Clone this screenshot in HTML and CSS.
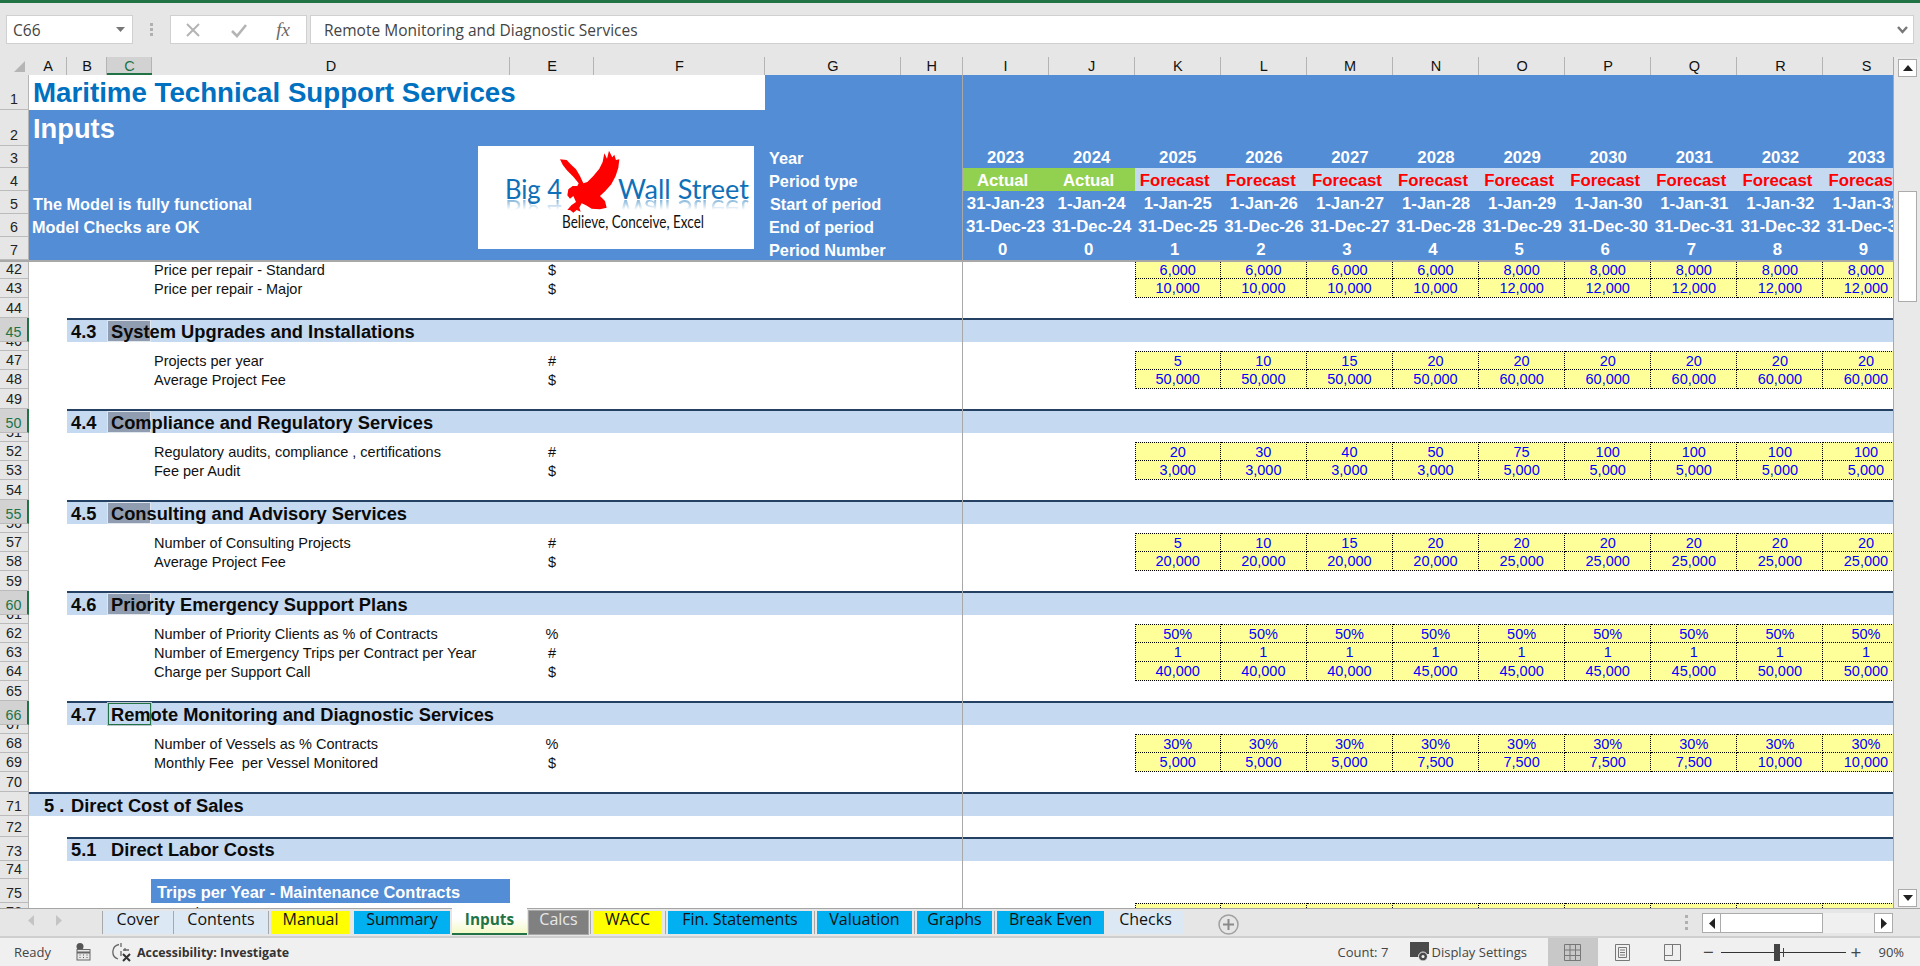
FILE: index.html
```html
<!DOCTYPE html>
<html lang="en">
<head>
<meta charset="utf-8">
<title>Maritime Technical Support Services - Inputs</title>
<link rel="stylesheet" href="styles.css">
</head>
<body>
<div class="app">
  <div class="ribbon-edge"></div>

  <div class="formula-bar">
    <div class="name-box"><span>C66</span><svg class="tri" width="9" height="5" viewBox="0 0 9 5"><path d="M0 0h9L4.5 5z"/></svg></div>
    <div class="grip"><i></i><i></i><i></i></div>
    <div class="fn-box">
      <svg width="16" height="16" viewBox="0 0 16 16"><path d="M2 2l12 12M14 2L2 14" stroke="#b4b4b4" stroke-width="2" fill="none"/></svg>
      <svg width="18" height="16" viewBox="0 0 18 16"><path d="M2 9l5 5L16 3" stroke="#b4b4b4" stroke-width="2.6" fill="none"/></svg>
      <span class="fx">fx</span>
    </div>
    <div class="formula-input"><span>Remote Monitoring and Diagnostic Services</span>
      <svg width="11" height="8" viewBox="0 0 11 8"><path d="M1 1l4.500 5L10 1" stroke="#777" stroke-width="2.400" fill="none"/></svg>
    </div>
  </div>

  <div class="workspace">
    <div class="sheet">
      <div class="col-heads">
        <div class="corner"><svg width="11" height="11" viewBox="0 0 11 11"><path d="M11 0v11H0z" fill="#b5b5b5"/></svg></div>
        <div class="ch">A</div><div class="ch">B</div><div class="ch on">C</div><div class="ch">D</div><div class="ch">E</div><div class="ch">F</div><div class="ch">G</div><div class="ch">H</div>
        <div class="ch">I</div><div class="ch">J</div><div class="ch">K</div><div class="ch">L</div><div class="ch">M</div><div class="ch">N</div><div class="ch">O</div><div class="ch">P</div><div class="ch">Q</div><div class="ch">R</div><div class="ch">S</div>
      </div>

      <div class="banner">
        <div class="b b1"><div class="rh">1</div><div class="title-cell">Maritime Technical Support Services</div></div>
        <div class="b b2"><div class="rh">2</div><div class="inputs-cell">Inputs</div></div>
        <div class="b b3"><div class="rh">3</div><div class="note"></div><div class="tl-label">Year</div><div></div>
          <div class="tl">2023</div><div class="tl">2024</div><div class="tl">2025</div><div class="tl">2026</div><div class="tl">2027</div><div class="tl">2028</div><div class="tl">2029</div><div class="tl">2030</div><div class="tl">2031</div><div class="tl">2032</div><div class="tl">2033</div></div>
        <div class="b b4"><div class="rh">4</div><div class="note"></div><div class="tl-label">Period type</div><div></div>
          <div class="tl act">Actual</div><div class="tl act">Actual</div><div class="tl fc">Forecast</div><div class="tl fc">Forecast</div><div class="tl fc">Forecast</div><div class="tl fc">Forecast</div><div class="tl fc">Forecast</div><div class="tl fc">Forecast</div><div class="tl fc">Forecast</div><div class="tl fc">Forecast</div><div class="tl fc">Forecast</div></div>
        <div class="b b4"><div class="rh">5</div><div class="note">The Model is fully functional</div><div class="tl-label start">Start of period</div><div></div>
          <div class="tl">31-Jan-23</div><div class="tl">1-Jan-24</div><div class="tl">1-Jan-25</div><div class="tl">1-Jan-26</div><div class="tl">1-Jan-27</div><div class="tl">1-Jan-28</div><div class="tl">1-Jan-29</div><div class="tl">1-Jan-30</div><div class="tl">1-Jan-31</div><div class="tl">1-Jan-32</div><div class="tl">1-Jan-33</div></div>
        <div class="b b4"><div class="rh">6</div><div class="note check">Model Checks are OK</div><div class="tl-label">End of period</div><div></div>
          <div class="tl">31-Dec-23</div><div class="tl">31-Dec-24</div><div class="tl">31-Dec-25</div><div class="tl">31-Dec-26</div><div class="tl">31-Dec-27</div><div class="tl">31-Dec-28</div><div class="tl">31-Dec-29</div><div class="tl">31-Dec-30</div><div class="tl">31-Dec-31</div><div class="tl">31-Dec-32</div><div class="tl">31-Dec-33</div></div>
        <div class="b b4"><div class="rh">7</div><div class="note"></div><div class="tl-label">Period Number</div><div></div>
          <div class="tl num">0</div><div class="tl num">0</div><div class="tl num">1</div><div class="tl num">2</div><div class="tl num">3</div><div class="tl num">4</div><div class="tl num">5</div><div class="tl num">6</div><div class="tl num">7</div><div class="tl num">8</div><div class="tl num">9</div></div>

        <svg class="logo" width="276" height="103" viewBox="0 0 276 103">
          <defs>
            <linearGradient id="fade" x1="0" y1="0" x2="0" y2="1"><stop offset="0" stop-color="#fff" stop-opacity=".55"/><stop offset="1" stop-color="#fff" stop-opacity="0"/></linearGradient>
            <mask id="rm"><rect x="0" y="53" width="276" height="11" fill="url(#fade)"/></mask>
            <text id="big" x="27" y="53" class="lg" textLength="57" lengthAdjust="spacingAndGlyphs">Big 4</text>
            <text id="wall" x="140" y="53" class="lg" textLength="131" lengthAdjust="spacingAndGlyphs">Wall Street</text>
          </defs>
          <use href="#big"/>
          <use href="#wall"/>
          <g mask="url(#rm)"><use href="#big" transform="matrix(1 0 0 -1 0 107)"/><use href="#wall" transform="matrix(1 0 0 -1 0 107)"/></g>
          <text x="84" y="82" class="tag" textLength="142" lengthAdjust="spacingAndGlyphs">Believe, Conceive, Excel</text>
          <polygon transform="translate(72 0) scale(.3333)" fill="#f00" points="30,40 50,42 62,55 78,70 90,90 100,112 112,108 130,90 148,68 158,48 163,22 171,38 177,14 187,34 193,26 198,42 208,40 205,65 197,90 184,115 166,135 150,150 165,165 170,185 150,190 125,188 108,178 95,172 88,185 92,197 80,192 70,200 60,192 52,192 64,178 78,168 70,150 60,158 52,148 55,130 68,120 82,120 86,112 70,92 50,72 38,56"/>
        </svg>
      </div>

      <div class="rows">
        <div class="r first"><div class="rh">42</div><div class="lbl">Price per repair - Standard</div><div class="unit">$</div><div class="cell k">6,000</div><div class="cell">6,000</div><div class="cell">6,000</div><div class="cell">6,000</div><div class="cell">8,000</div><div class="cell">8,000</div><div class="cell">8,000</div><div class="cell">8,000</div><div class="cell">8,000</div></div>
        <div class="r"><div class="rh">43</div><div class="lbl">Price per repair - Major</div><div class="unit">$</div><div class="cell k">10,000</div><div class="cell">10,000</div><div class="cell">10,000</div><div class="cell">10,000</div><div class="cell">12,000</div><div class="cell">12,000</div><div class="cell">12,000</div><div class="cell">12,000</div><div class="cell">12,000</div></div>
        <div class="r blank"><div class="rh">44</div></div>

        <div class="r sec"><div class="rh on">45</div><div class="bar"><div class="no">4.3</div><div class="ti"><i class="sel"></i><span>System Upgrades and Installations</span></div></div></div>
        <div class="r gap"><div class="rh">46</div></div>
        <div class="r first"><div class="rh">47</div><div class="lbl">Projects per year</div><div class="unit">#</div><div class="cell k">5</div><div class="cell">10</div><div class="cell">15</div><div class="cell">20</div><div class="cell">20</div><div class="cell">20</div><div class="cell">20</div><div class="cell">20</div><div class="cell">20</div></div>
        <div class="r"><div class="rh">48</div><div class="lbl">Average Project Fee</div><div class="unit">$</div><div class="cell k">50,000</div><div class="cell">50,000</div><div class="cell">50,000</div><div class="cell">50,000</div><div class="cell">60,000</div><div class="cell">60,000</div><div class="cell">60,000</div><div class="cell">60,000</div><div class="cell">60,000</div></div>
        <div class="r blank"><div class="rh">49</div></div>

        <div class="r sec"><div class="rh on">50</div><div class="bar"><div class="no">4.4</div><div class="ti"><i class="sel"></i><span>Compliance and Regulatory Services</span></div></div></div>
        <div class="r gap"><div class="rh">51</div></div>
        <div class="r first"><div class="rh">52</div><div class="lbl">Regulatory audits, compliance , certifications</div><div class="unit">#</div><div class="cell k">20</div><div class="cell">30</div><div class="cell">40</div><div class="cell">50</div><div class="cell">75</div><div class="cell">100</div><div class="cell">100</div><div class="cell">100</div><div class="cell">100</div></div>
        <div class="r"><div class="rh">53</div><div class="lbl">Fee per Audit</div><div class="unit">$</div><div class="cell k">3,000</div><div class="cell">3,000</div><div class="cell">3,000</div><div class="cell">3,000</div><div class="cell">5,000</div><div class="cell">5,000</div><div class="cell">5,000</div><div class="cell">5,000</div><div class="cell">5,000</div></div>
        <div class="r blank"><div class="rh">54</div></div>

        <div class="r sec"><div class="rh on">55</div><div class="bar"><div class="no">4.5</div><div class="ti"><i class="sel"></i><span>Consulting and Advisory Services</span></div></div></div>
        <div class="r gap"><div class="rh">56</div></div>
        <div class="r first"><div class="rh">57</div><div class="lbl">Number of Consulting Projects</div><div class="unit">#</div><div class="cell k">5</div><div class="cell">10</div><div class="cell">15</div><div class="cell">20</div><div class="cell">20</div><div class="cell">20</div><div class="cell">20</div><div class="cell">20</div><div class="cell">20</div></div>
        <div class="r"><div class="rh">58</div><div class="lbl">Average Project Fee</div><div class="unit">$</div><div class="cell k">20,000</div><div class="cell">20,000</div><div class="cell">20,000</div><div class="cell">20,000</div><div class="cell">25,000</div><div class="cell">25,000</div><div class="cell">25,000</div><div class="cell">25,000</div><div class="cell">25,000</div></div>
        <div class="r blank"><div class="rh">59</div></div>

        <div class="r sec"><div class="rh on">60</div><div class="bar"><div class="no">4.6</div><div class="ti"><i class="sel"></i><span>Priority Emergency Support Plans</span></div></div></div>
        <div class="r gap"><div class="rh">61</div></div>
        <div class="r first"><div class="rh">62</div><div class="lbl">Number of Priority Clients as % of Contracts</div><div class="unit">%</div><div class="cell k">50%</div><div class="cell">50%</div><div class="cell">50%</div><div class="cell">50%</div><div class="cell">50%</div><div class="cell">50%</div><div class="cell">50%</div><div class="cell">50%</div><div class="cell">50%</div></div>
        <div class="r"><div class="rh">63</div><div class="lbl">Number of Emergency Trips per Contract per Year</div><div class="unit">#</div><div class="cell k">1</div><div class="cell">1</div><div class="cell">1</div><div class="cell">1</div><div class="cell">1</div><div class="cell">1</div><div class="cell">1</div><div class="cell">1</div><div class="cell">1</div></div>
        <div class="r"><div class="rh">64</div><div class="lbl">Charge per Support Call</div><div class="unit">$</div><div class="cell k">40,000</div><div class="cell">40,000</div><div class="cell">40,000</div><div class="cell">45,000</div><div class="cell">45,000</div><div class="cell">45,000</div><div class="cell">45,000</div><div class="cell">50,000</div><div class="cell">50,000</div></div>
        <div class="r blank"><div class="rh">65</div></div>

        <div class="r sec"><div class="rh on">66</div><div class="bar"><div class="no">4.7</div><div class="ti"><i class="active"></i><span>Remote Monitoring and Diagnostic Services</span></div></div></div>
        <div class="r gap"><div class="rh">67</div></div>
        <div class="r first"><div class="rh">68</div><div class="lbl">Number of Vessels as % Contracts</div><div class="unit">%</div><div class="cell k">30%</div><div class="cell">30%</div><div class="cell">30%</div><div class="cell">30%</div><div class="cell">30%</div><div class="cell">30%</div><div class="cell">30%</div><div class="cell">30%</div><div class="cell">30%</div></div>
        <div class="r"><div class="rh">69</div><div class="lbl">Monthly Fee&nbsp; per Vessel Monitored</div><div class="unit">$</div><div class="cell k">5,000</div><div class="cell">5,000</div><div class="cell">5,000</div><div class="cell">7,500</div><div class="cell">7,500</div><div class="cell">7,500</div><div class="cell">7,500</div><div class="cell">10,000</div><div class="cell">10,000</div></div>
        <div class="r blank"><div class="rh">70</div></div>

        <div class="r sec wide"><div class="rh">71</div><div class="bar"><div class="no">5 .</div><div class="ti"><span>Direct Cost of Sales</span></div></div></div>
        <div class="r r72"><div class="rh">72</div></div>
        <div class="r sec"><div class="rh">73</div><div class="bar"><div class="no">5.1</div><div class="ti"><span>Direct Labor Costs</span></div></div></div>
        <div class="r r74"><div class="rh">74</div></div>
        <div class="r r75"><div class="rh">75</div><div class="box-title">Trips per Year - Maintenance Contracts</div></div>
        <div class="r first"><div class="rh">76</div><div class="lbl">Avg Trips per Contract</div><div class="unit">#</div><div class="cell k">2</div><div class="cell">2</div><div class="cell">2</div><div class="cell">2</div><div class="cell">2</div><div class="cell">2</div><div class="cell">2</div><div class="cell">2</div><div class="cell">2</div></div>
      </div>

      <div class="freeze-v"></div>
      <div class="freeze-h"></div>
    </div>

    <div class="vscroll">
      <div class="vbtn"><svg width="10" height="6" viewBox="0 0 10 6"><path d="M5 0l5 6H0z"/></svg></div>
      <div class="vspace a"></div>
      <div class="vthumb"></div>
      <div class="vspace"></div>
      <div class="vbtn"><svg width="10" height="6" viewBox="0 0 10 6"><path d="M0 0h10L5 6z"/></svg></div>
    </div>
  </div>

  <div class="tabbar">
    <div class="nav">
      <svg width="6" height="11" viewBox="0 0 6 11"><path d="M6 0v11L0 5.500z"/></svg>
      <svg width="6" height="11" viewBox="0 0 6 11"><path d="M0 0v11l6-5.500z"/></svg>
    </div>
    <div class="tab lt cover">Cover</div>
    <div class="tab lt contents">Contents</div>
    <div class="tab yl manual">Manual</div>
    <div class="tab bl summary">Summary</div>
    <div class="tab cur">Inputs</div>
    <div class="tab gy calcs">Calcs</div>
    <div class="tab yl wacc">WACC</div>
    <div class="tab bl fin">Fin. Statements</div>
    <div class="tab bl val">Valuation</div>
    <div class="tab bl gra">Graphs</div>
    <div class="tab bl bre">Break Even</div>
    <div class="tab lt che">Checks</div>
    <svg class="add" width="21" height="21" viewBox="0 0 21 21"><circle cx="10.500" cy="10.500" r="9.500" fill="none" stroke="#a0a0a0" stroke-width="1.500"/><path d="M10.500 5v11M5 10.500h11" stroke="#8a8a8a" stroke-width="2"/></svg>
    <div class="hgrip"><i></i><i></i><i></i></div>
    <div class="hscroll">
      <div class="hbtn"><svg width="6" height="11" viewBox="0 0 6 11"><path d="M6 0v11L0 5.500z"/></svg></div>
      <div class="hthumb"></div>
      <div class="htrack"></div>
      <div class="hbtn"><svg width="6" height="11" viewBox="0 0 6 11"><path d="M0 0v11l6-5.500z"/></svg></div>
    </div>
  </div>

  <div class="statusbar">
    <span class="ready">Ready</span>
    <svg class="macro" width="15" height="18" viewBox="0 0 15 18"><circle cx="4" cy="3.500" r="3.500" fill="#555"/><rect x="1" y="6.500" width="13" height="10.500" fill="#e8e8e8" stroke="#666"/><path d="M1 9.500h13" stroke="#666" stroke-width="2"/><path d="M3.500 12h1M7 12h1M10.500 12h1M3.500 14.500h1M7 14.500h1M10.500 14.500h1" stroke="#555"/></svg>
    <svg class="a11y" width="20" height="20" viewBox="0 0 20 20"><path d="M7 2.500A7.500 7.500 0 0 0 6 17M9 1v4M11 8h6M13 6v3M9 9v5" stroke="#666" stroke-width="1.300" fill="none"/><path d="M11 12l7 7M18 12l-7 7" stroke="#333" stroke-width="2" fill="none"/></svg>
    <b class="a11y-t">Accessibility: Investigate</b>
    <span class="count">Count: 7</span>
    <svg class="disp" width="20" height="20" viewBox="0 0 20 20"><path d="M0 0h19v12H10v3H0z" fill="#4a4a4a"/><circle cx="13" cy="14.500" r="4.500" fill="#4a4a4a" stroke="#f0f0f0"/><circle cx="13" cy="14.500" r="1.500" fill="#f0f0f0"/></svg>
    <span class="dset">Display Settings</span>
    <div class="view sel-view"><svg width="17" height="17" viewBox="0 0 17 17"><path d="M.5.500h16v16H.5zM.5 6h16M.5 11.500h16M6 .500v16M11.500.500v16" fill="none" stroke="#777"/></svg></div>
    <div class="view"><svg width="15" height="17" viewBox="0 0 15 17"><path d="M.5.500h14v16H.5z" fill="none" stroke="#777"/><path d="M3.500 3.500h8v10h-8zM5 6h5M5 8.500h5M5 11h5" fill="none" stroke="#777"/></svg></div>
    <div class="view"><svg width="17" height="17" viewBox="0 0 17 17"><path d="M.5.500h16v16H.5zM.5 11.500h8V.500" fill="none" stroke="#777"/></svg></div>
    <div class="zoom">
      <span class="zs">&minus;</span>
      <div class="slider"><i class="thumb"></i><i class="tick"></i></div>
      <span class="zs plus">+</span>
      <span class="pct">90%</span>
    </div>
  </div>
</div>
</body>
</html>
```

FILE: styles.css
```css
* { box-sizing: border-box; }
html, body { margin: 0; height: 100%; overflow: hidden; }
body { background: #e6e6e6; font-family: "Liberation Sans", Arial, sans-serif; color: #000; }
.app { width: 1920px; height: 966px; display: flex; flex-direction: column; }
.ribbon-edge { height: 3px; background: #217346; flex: none; }

/* formula bar */
.formula-bar { height: 54px; flex: none; display: flex; align-items: flex-start; padding: 12px 6px 0 6px; font-family: "Open Sans", sans-serif; }
.name-box, .fn-box, .formula-input { height: 29px; background: #fff; border: 1px solid #d0d0d0; display: flex; align-items: center; }
.name-box { width: 127px; padding: 0 7px 0 6px; justify-content: space-between; font-size: 15.500px; color: #444; }
.tri { fill: #777; }
.grip { width: 37px; height: 29px; display: flex; flex-direction: column; gap: 2px; align-items: center; justify-content: center; }
.grip i, .hgrip i { display: block; width: 3px; height: 3px; background: #b0b0b0; }
.fn-box { width: 137px; padding: 0 16px 0 14px; justify-content: space-between; }
.fx { font: italic 19px "Liberation Serif", serif; color: #6a6a6a; }
.formula-input { margin-left: 3px; flex: 1; justify-content: space-between; padding: 0 5px 0 13px; font-size: 15.500px; color: #444; }

/* main grid */
.workspace { height: 851px; flex: none; display: flex; }
.sheet { width: 1894px; flex: none; position: relative; overflow: hidden; background: #fff; border-right: 1px solid #a8a8a8; }
.col-heads { height: 18px; background: #e6e6e6; display: grid; grid-template-rows: 100%; grid-template-columns: 29px 38px 40px 45px 358px 84px 171px 136px 61.500px repeat(11, 86.1px); }
.corner { position: relative; display: flex; justify-content: flex-end; align-items: flex-end; padding: 0 4px 3px 0; }
.ch { font-size: 14.500px; line-height: 18px; text-align: center; color: #111; position: relative; }
.ch::after { content: ""; position: absolute; right: 0; top: 0; bottom: 0; width: 1px; background: #b4b4b4; }
.ch.on { background: #d2d2d2; color: #217346; border-bottom: 2px solid #217346; }

.rh { background: #e6e6e6; border-bottom: 1px solid #bbb; border-right: 1px solid #b5b5b5; font-size: 14.300px; font-weight: 400; line-height: 16px; color: #222; display: flex; justify-content: center; align-items: flex-end; padding-bottom: 1px; overflow: hidden; }
.rh.on { background: #d2d2d2; color: #217346; border-right: 2px solid #217346; }

.banner { position: relative; background: #538dd5; color: #fff; font-weight: 700; }
.b { display: grid; height: 23px; grid-template-rows: 100%; grid-template-columns: 29px 736px 136px 61.500px repeat(11, 86.1px); font-size: 16.300px; line-height: 25px; }
.b1 { height: 35px; grid-template-columns: 29px 736px; }
.b2 { height: 36px; grid-template-columns: 29px 736px; }
.b3 { height: 22px; line-height: 24px; }
.b1 .rh, .b2 .rh { padding-bottom: 2px; }
.title-cell { background: #fff; color: #0070c0; font-size: 27.700px; line-height: 36px; padding-left: 4px; white-space: nowrap; }
.inputs-cell { font-size: 27.300px; line-height: 37px; padding-left: 4px; }
.note { padding-left: 4px; line-height: 26px; }
.note.check { padding-left: 3px; }
.tl-label { padding-left: 4px; white-space: nowrap; line-height: 26px; }
.b3 .tl-label { line-height: 25px; }
.tl-label.start { padding-left: 5px; }
.tl { text-align: center; white-space: nowrap; font-size: 16.800px; }
.act, .num, .fc { padding-right: 6px; }
.act { background: #92d050; }
.fc { background: #c5d9f1; color: #f00; }
.logo { position: absolute; left: 478px; top: 71px; background: #fff; }
.lg { font: 400 27px Lato, sans-serif; fill: #0f70b7; }
.tag { font: 400 17px Lato, sans-serif; fill: #111; }

.rows { font-size: 14.500px; }
.r { display: grid; height: 19px; grid-template-rows: 100%; grid-template-columns: 29px 123px 358px 84px 540.700px repeat(9, 86.1px); line-height: 19px; }
.r .rh { grid-column: 1; }
.blank { height: 20px; }
.gap { height: 9px; }
.r72 { height: 20.500px; }
.r74 { height: 18.500px; }
.r75 { height: 24px; }
.lbl { grid-column: 3; padding: 1px 0 0 2px; white-space: nowrap; color: #111; }
.unit { grid-column: 4; text-align: center; padding-top: 1px; color: #111; }
.cell { background: #ffff99; color: #0000ff; text-align: center; border-right: 1px dotted #000; border-bottom: 1px dotted #000; line-height: 19.500px; }
.cell.k { grid-column: 6; border-left: 1px dotted #000; }
.first .cell { border-top: 1px dotted #000; line-height: 18.500px; }

.sec { height: 24px; grid-template-columns: 29px 38px 1fr; }
.sec .bar { grid-column: 3; }
.bar { background: #c5d9f1; border-top: 2px solid #244062; display: flex; font-size: 18.300px; font-weight: 700; line-height: 23px; color: #0a0a0a; white-space: nowrap; }
.no { width: 40px; padding-left: 4px; flex: none; }
.ti { position: relative; flex: 1; padding-left: 4px; }
.ti span { position: relative; }
.sel { position: absolute; left: 0; top: 0; width: 44px; height: 22px; background: rgba(50, 50, 60, .36); border: 1px solid #e0e6ee; }
.active { position: absolute; left: 1px; top: 0; width: 43px; height: 22px; background: none; border: 1px solid #217346; outline: 1px solid #bcc7d0; }
.wide { grid-template-columns: 29px 1fr; }
.wide .bar { grid-column: 2; }
.wide .no { width: 42px; padding-left: 15px; }
.wide .ti { padding-left: 0; }
.r72 + .sec .bar { line-height: 22px; }
.box-title { grid-column: 3; background: #538dd5; color: #fff; font-weight: 700; font-size: 16.400px; line-height: 26px; padding-left: 6px; white-space: nowrap; margin-left: -1px; }

.freeze-v { position: absolute; left: 962px; top: 18px; bottom: 0; width: 1px; background: #a8a8a8; }
.freeze-h { position: absolute; left: 0; right: 0; top: 203px; height: 2px; background: #a8a8a8; }

/* vertical scrollbar */
.vscroll { flex: 1; padding: 2px 3px 1px 4px; display: flex; flex-direction: column; background: #e9e9e9; }
.vbtn { height: 18px; flex: none; background: #fff; border: 1px solid #ababab; display: flex; align-items: center; justify-content: center; fill: #222; }
.vspace { flex: 1; }
.vspace.a { flex: none; height: 114px; }
.vthumb { height: 111px; flex: none; background: #fff; border: 1px solid #ababab; }

/* tabs */
.tabbar { height: 30px; flex: none; background: #e6e6e6; display: flex; border-top: 1px solid #a5a5a5; border-bottom: 2px solid #cfcfcf; font-family: "Open Sans", sans-serif; font-size: 16px; position: relative; padding-top: 2px; }
.nav { width: 103px; padding: 4px 0 0 28px; display: flex; gap: 22px; align-items: flex-start; fill: #c4c4c4; flex: none; }
.tab { height: 23px; line-height: 16px; text-align: center; white-space: nowrap; color: #111; position: relative; flex: none; }
.tab::before { content: ""; position: absolute; left: -3px; top: 0; height: 23px; width: 1px; background: #a8a8a8; }
.lt { background: #dce9f5; }
.yl { background: #ff0; }
.bl { background: #00b0f0; }
.gy { background: #808080; color: #e8e8e8; }
.cover { width: 70px; }
.cover::before { left: -1px; }
.contents { width: 94px; margin-left: 1px; }
.contents::before { left: -1px; }
.manual { width: 79px; margin-left: 3px; }
.summary { width: 96px; margin-left: 4px; }
.summary::before { display: none; }
.cur { width: 75px; margin-left: 2px; height: 27px; margin-top: -3px; padding-top: 3px; background: linear-gradient(#fff 40%, #f4f9c8); border-bottom: 2px solid #217346; color: #217346; font-weight: 700; font-size: 15.400px; line-height: 17px; }
.cur::before { display: none; }
.calcs { width: 59px; margin-left: 2px; outline: 1px solid #a8a8a8; }
.calcs::before { display: none; }
.wacc { width: 69px; margin-left: 5px; }
.fin { width: 144px; margin-left: 6px; }
.val { width: 95px; margin-left: 5px; }
.gra { width: 75px; margin-left: 5px; }
.bre { width: 107px; margin-left: 5px; }
.che { width: 75px; margin-left: 4px; }
.che::before { display: none; }
.add { margin: 3px 0 0 35px; flex: none; }
.hgrip { margin: 4px 0 0 446px; width: 4px; display: flex; flex-direction: column; gap: 3px; height: 16px; }
.hscroll { position: absolute; left: 1702px; top: 4px; width: 191px; height: 20px; display: flex; background: #f0f0f0; }
.hbtn { width: 19px; flex: none; background: #fff; border: 1px solid #ababab; display: flex; align-items: center; justify-content: center; fill: #222; }
.hthumb { width: 102px; flex: none; background: #fff; border: 1px solid #ababab; border-left: none; }
.htrack { flex: 1; }

/* status bar */
.statusbar { flex: 1; background: #f0f0f0; display: flex; align-items: center; font-family: "Open Sans", sans-serif; font-size: 13px; color: #444; padding-left: 14px; }
.ready { width: 62px; flex: none; }
.macro { flex: none; }
.a11y { margin-left: 21px; flex: none; }
.a11y-t { margin-left: 5px; width: 1200.500px; flex: none; font-size: 12.400px; color: #333; }
.count { width: 72px; flex: none; }
.disp { flex: none; }
.dset { width: 116px; margin-left: 2px; flex: none; }
.view { width: 50px; height: 100%; display: flex; align-items: center; justify-content: center; flex: none; }
.sel-view { background: #c8c8c8; }
.zoom { display: flex; align-items: center; margin-left: 4px; }
.zs { width: 14px; text-align: center; font-size: 19px; line-height: 20px; color: #444; flex: none; }
.slider { width: 125.500px; height: 1px; background: #333; position: relative; margin: 0 3px 0 5px; }
.thumb { position: absolute; left: 53px; top: -8px; width: 6px; height: 17px; background: #444; }
.tick { position: absolute; left: 62px; top: -4px; width: 1px; height: 9px; background: #444; }
.pct { margin-left: 15.500px; }
```
